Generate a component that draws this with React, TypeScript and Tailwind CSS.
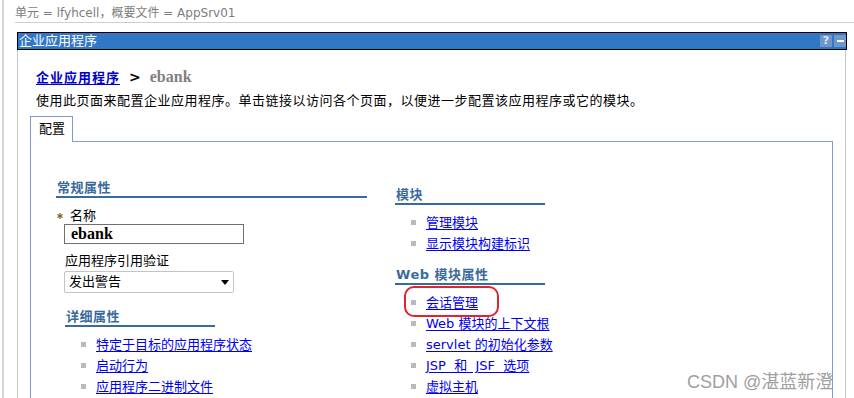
import React from "react";

function Bullet() {
  return <span className="inline-block w-[5px] h-[5px] bg-[#b9b9c1] shrink-0" />;
}

function LinkItem({ text, ring }: { text: string; ring?: boolean }) {
  return (
    <li className="relative flex items-center h-[21px] leading-[21px]">
      <Bullet />
      <a className="ml-[10px] text-[#0000ee] underline underline-offset-[2px] whitespace-pre">{text}</a>
      {ring && (
        <span className="absolute left-[-7px] top-[-6px] w-[95px] h-[31px] border-2 border-[#e0242e] rounded-[10px]" />
      )}
    </li>
  );
}

function Heading({ text, width, extra }: { text: string; width: string; extra?: string }) {
  return (
    <div
      className={`${width} ${extra ?? ""} leading-[16px] pl-[1px] border-b-2 border-[#3a6a9c] text-[#3a6a9c] font-bold tracking-[0.5px] whitespace-nowrap`}
    >
      {text}
    </div>
  );
}

export default function App() {
  return (
    <div className="w-[854px] h-[398px] bg-white relative overflow-hidden font-['DejaVu_Sans','Noto_Sans_CJK_SC',sans-serif] text-[13px] text-black">
      <div className="ml-[2px] h-full border-l-2 border-[#d6d6d6] flex flex-col">
        {/* header */}
        <div className="ml-[11px] h-[23px] shrink-0 border-b border-[#cfcfcf] text-[12px] leading-[16px] pt-[5px] text-[#7d7d7d] whitespace-nowrap">
          单元 = lfyhcell，概要文件 = AppSrv01
        </div>

        {/* portlet */}
        <div className="mt-[9px] ml-[13px] w-[830px] flex-1 flex flex-col min-h-0">
          <div className="h-[18px] shrink-0 border border-black bg-[#3276c6] flex items-center justify-between">
            <span className="text-white leading-[16px] pl-[1px]">企业应用程序</span>
            <div className="flex gap-[2px]">
              <span className="w-[12px] h-[12px] bg-[#6e98cc] text-[#e4e8f0] text-[11px] font-bold leading-[12px] text-center">?</span>
              <span className="w-[12px] h-[12px] bg-[#6e98cc] flex items-center justify-center">
                <span className="w-[7px] h-[2px] bg-white" />
              </span>
            </div>
          </div>

          <div className="w-[829px] flex-1 border-l border-r border-[#c6c6c6] pl-[18px] flex flex-col">
            {/* breadcrumb */}
            <div className="pt-[18px] leading-[18px] flex items-baseline whitespace-nowrap">
              <a className="font-bold text-[#0000cc] underline underline-offset-[2px] tracking-[1px]">企业应用程序</a>
              <span className="ml-[9px] font-bold text-[14px]">&gt;</span>
              <span className="ml-[9px] font-['Liberation_Serif',serif] font-bold text-[16px] text-[#808080]">ebank</span>
            </div>
            <div className="mt-[6px] leading-[16px] tracking-[0.5px] whitespace-nowrap">
              使用此页面来配置企业应用程序。单击链接以访问各个页面，以便进一步配置该应用程序或它的模块。
            </div>

            {/* tabs */}
            <div className="mt-[7px] ml-[-6px] w-[803px] flex h-[26px] shrink-0">
              <div className="w-[43px] h-[26px] border-l border-t border-r border-[#7b9dd3] pl-[8px] pt-[4px] leading-[16px]">
                配置
              </div>
              <div className="flex-1 border-b border-[#7b9dd3]" />
            </div>

            {/* panel */}
            <div className="ml-[-6px] w-[803px] flex-1 border-l border-r border-[#7b9dd3] flex pl-[25px]">
              {/* left column */}
              <div className="w-[311px] pt-[38px] flex flex-col">
                <Heading text="常规属性" width="w-[311px]" />
                <div className="mt-[10px] h-[16px] leading-[16px] flex items-center">
                  <svg width="6" height="6" viewBox="0 0 6 6" className="ml-[1px] mt-[-1px]">
                    <g stroke="#7a6420" strokeWidth="1.2">
                      <line x1="3" y1="0" x2="3" y2="6" />
                      <line x1="0.4" y1="1.5" x2="5.6" y2="4.5" />
                      <line x1="0.4" y1="4.5" x2="5.6" y2="1.5" />
                    </g>
                  </svg>
                  <span className="ml-[7px]">名称</span>
                </div>
                <div className="ml-[8px] w-[180px] h-[20px] border border-[#707070] pl-[6px] flex items-center font-['Liberation_Serif',serif] font-bold text-[16px] leading-[18px]">
                  ebank
                </div>
                <div className="mt-[9px] ml-[9px] leading-[16px]">应用程序引用验证</div>
                <div className="mt-[2px] ml-[8px] w-[170px] h-[22px] border border-[#c4c4c4] rounded-[2px] flex items-center justify-between pl-[4px] pr-[4px]">
                  <span className="leading-[16px]">发出警告</span>
                  <svg width="8" height="5" viewBox="0 0 8 5">
                    <polygon points="0,0 8,0 4,5" fill="#000" />
                  </svg>
                </div>
                <Heading text="详细属性" width="w-[150px]" extra="mt-[16px] ml-[9px]" />
                <ul className="mt-[7px] ml-[25px]">
                  <LinkItem text="特定于目标的应用程序状态" />
                  <LinkItem text="启动行为" />
                  <LinkItem text="应用程序二进制文件" />
                </ul>
              </div>

              {/* right column */}
              <div className="ml-[28px] w-[150px] pt-[45px] flex flex-col">
                <Heading text="模块" width="w-[150px]" />
                <ul className="mt-[7px] ml-[16px]">
                  <LinkItem text="管理模块" />
                  <LinkItem text="显示模块构建标识" />
                </ul>
                <Heading text="Web 模块属性" width="w-[150px]" extra="mt-[13px]" />
                <ul className="mt-[7px] ml-[16px]">
                  <LinkItem text="会话管理" ring />
                  <LinkItem text="Web 模块的上下文根" />
                  <LinkItem text="servlet 的初始化参数" />
                  <LinkItem text="JSP  和  JSF  选项" />
                  <LinkItem text="虚拟主机" />
                </ul>
              </div>
            </div>
          </div>
        </div>
      </div>

      {/* watermark */}
      <div className="absolute left-[687px] top-[370px] leading-[24px] text-[18px] text-[#a0a0a0] font-['Liberation_Sans','Noto_Sans_CJK_SC',sans-serif] whitespace-nowrap">
        CSDN @湛蓝新澄
      </div>
    </div>
  );
}
